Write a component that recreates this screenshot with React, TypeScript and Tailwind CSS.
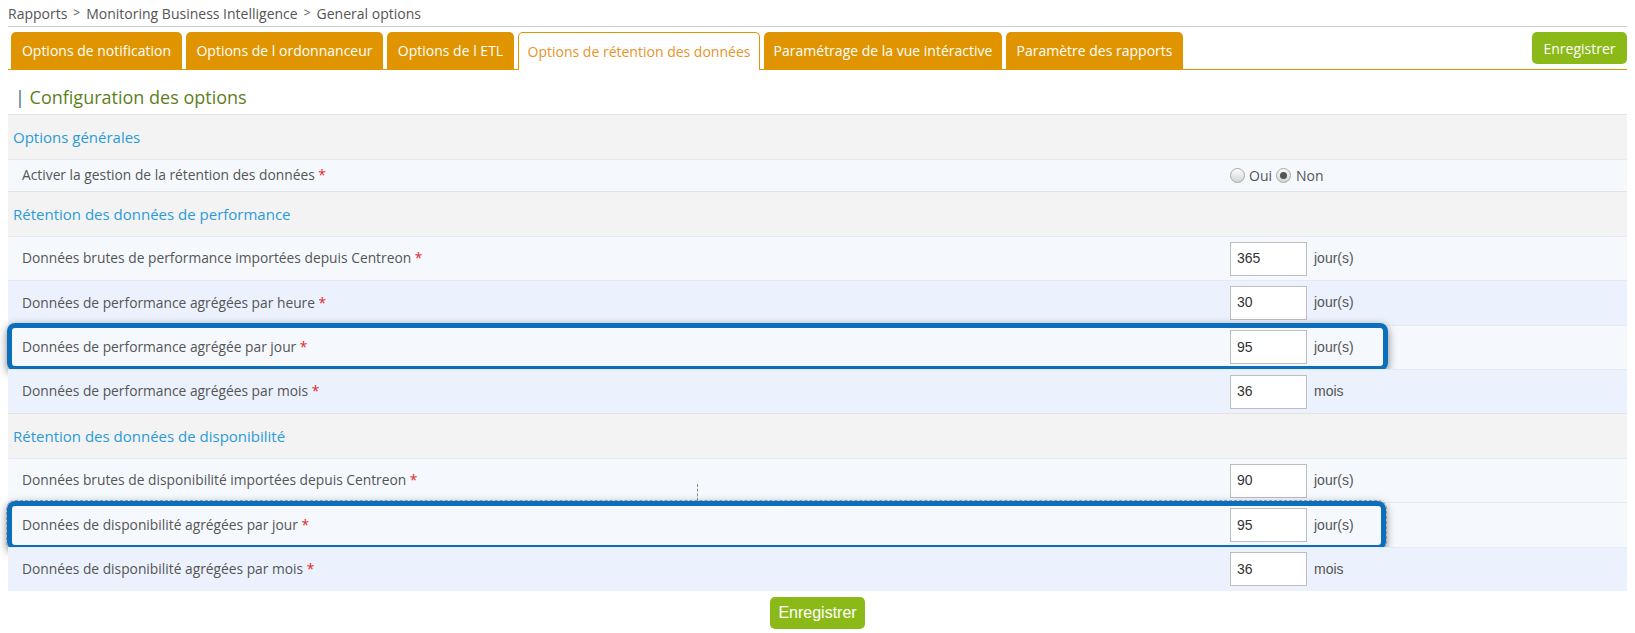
const tabs = [
  { label: 'Options de notification', w: 'w-[171px]' },
  { label: 'Options de l ordonnanceur', w: 'w-[197px]' },
  { label: 'Options de l ETL', w: 'w-[127px]' },
  { label: 'Options de rétention des données', w: 'w-[242px]', active: true },
  { label: 'Paramétrage de la vue intéractive', w: 'w-[238px]' },
  { label: 'Paramètre des rapports', w: 'w-[177px]' },
];

function Section({ title }: { title: string }) {
  return (
    <div className="h-[45px] border-t border-[#e3e3e3] bg-[#f3f3f3] px-[5px] flex items-center text-[15px] text-[#2b9bd8]">
      {title}
    </div>
  );
}

function Row({
  label,
  value,
  unit,
  dark,
  children,
}: {
  label: string;
  value: string;
  unit: string;
  dark?: boolean;
  children?: React.ReactNode;
}) {
  return (
    <div
      className={`relative h-[44.3px] border-t border-[#e6e9ee] flex items-center ${
        dark ? 'bg-[#ebf2fd]' : 'bg-[#f5f9fe]'
      }`}
    >
      <div className="w-[1222px] pl-[14px] text-[13.8px] text-[#555]">
        {label} <span className="text-[#e8262b]">*</span>
      </div>
      <div className="w-[77px] h-[34px] border border-[#bdbdbd] bg-white pl-[6px] flex items-center font-['Liberation_Sans'] text-[14px] text-[#333]">
        {value}
      </div>
      <span className="ml-[7px] font-['Liberation_Sans'] text-[14px] text-[#555]">{unit}</span>
      {children}
    </div>
  );
}

function Radio({ checked }: { checked?: boolean }) {
  return (
    <span className="w-[15px] h-[15px] rounded-full border border-[#a8a8a8] bg-gradient-to-b from-[#fdfdfd] to-[#d4d4d4] flex items-center justify-center">
      {checked && <span className="w-[7px] h-[7px] rounded-full bg-[#555]" />}
    </span>
  );
}

export default function App() {
  return (
    <div className="w-[1635px] h-[633px] bg-white px-2 font-['Open_Sans',sans-serif]">
      <div className="h-[27px] border-b border-[#cfcfcf] flex items-center gap-[6px] text-[14px] text-[#555]">
        <span>Rapports</span>
        <span className="text-[12px]">&gt;</span>
        <span>Monitoring Business Intelligence</span>
        <span className="text-[12px]">&gt;</span>
        <span>General options</span>
      </div>

      <div className="h-[43px] pt-[5px] flex items-start border-b border-[#e09500]">
        <div className="flex gap-[4px] pl-[3px]">
          {tabs.map((t) =>
            t.active ? (
              <div
                key={t.label}
                className={`${t.w} h-[38px] -mb-px rounded-t-[5px] border border-b-0 border-[#e09500] bg-white flex items-center justify-center text-[14px] text-[#e3952a]`}
              >
                {t.label}
              </div>
            ) : (
              <div
                key={t.label}
                className={`${t.w} h-[37px] rounded-t-[5px] bg-[#e09500] flex items-center justify-center text-[14px] font-medium text-white`}
              >
                {t.label}
              </div>
            )
          )}
        </div>
        <button className="ml-auto w-[95px] h-[32px] rounded-[5px] bg-[#8bba18] text-white text-[14px]">
          Enregistrer
        </button>
      </div>

      <div className="h-[44px] pt-[15px] leading-[24px] text-[18px] text-[#5d7f1c]">
        <span className="ml-[7px] text-[#3d6b84]">|</span> Configuration des options
      </div>

      <div>
        <Section title="Options générales" />
        <div className="h-[32px] border-t border-[#e6e9ee] bg-[#f5f9fe] flex items-center">
          <div className="w-[1222px] pl-[14px] text-[13.8px] text-[#555]">
            Activer la gestion de la rétention des données <span className="text-[#e8262b]">*</span>
          </div>
          <div className="flex items-center text-[14px] text-[#555]">
            <Radio />
            <span className="ml-[4px] mr-[4px]">Oui</span>
            <Radio checked />
            <span className="ml-[5px]">Non</span>
          </div>
        </div>

        <Section title="Rétention des données de performance" />
        <Row label="Données brutes de performance importées depuis Centreon" value="365" unit="jour(s)" />
        <Row label="Données de performance agrégées par heure" value="30" unit="jour(s)" dark />
        <Row label="Données de performance agrégée par jour" value="95" unit="jour(s)">
          <div className="absolute -top-[3px] -bottom-[2px] -left-px w-[1381px] rounded-[8px] border-5 border-[#0b6fbb] shadow-[0_3px_9px_rgba(0,0,0,0.5)]" />
        </Row>
        <Row label="Données de performance agrégées par mois" value="36" unit="mois" dark />

        <Section title="Rétention des données de disponibilité" />
        <Row label="Données brutes de disponibilité importées depuis Centreon" value="90" unit="jour(s)" />
        <Row label="Données de disponibilité agrégées par jour" value="95" unit="jour(s)">
          <div className="absolute -top-[2px] -bottom-[3px] -left-px w-[1379px] rounded-[8px] border-5 border-[#0b6fbb] shadow-[0_3px_9px_rgba(0,0,0,0.5)] outline outline-1 outline-dashed outline-[#9a9a9a]" />
          <div className="absolute left-[689px] -top-[19px] h-[17px] border-l border-dashed border-[#8a8a8a]" />
        </Row>
        <Row label="Données de disponibilité agrégées par mois" value="36" unit="mois" dark />
      </div>

      <div className="flex justify-center mt-[6px]">
        <button className="w-[95px] h-[32px] rounded-[5px] bg-[#8bba18] text-white text-[16px] font-['Liberation_Sans']">
          Enregistrer
        </button>
      </div>
    </div>
  );
}
